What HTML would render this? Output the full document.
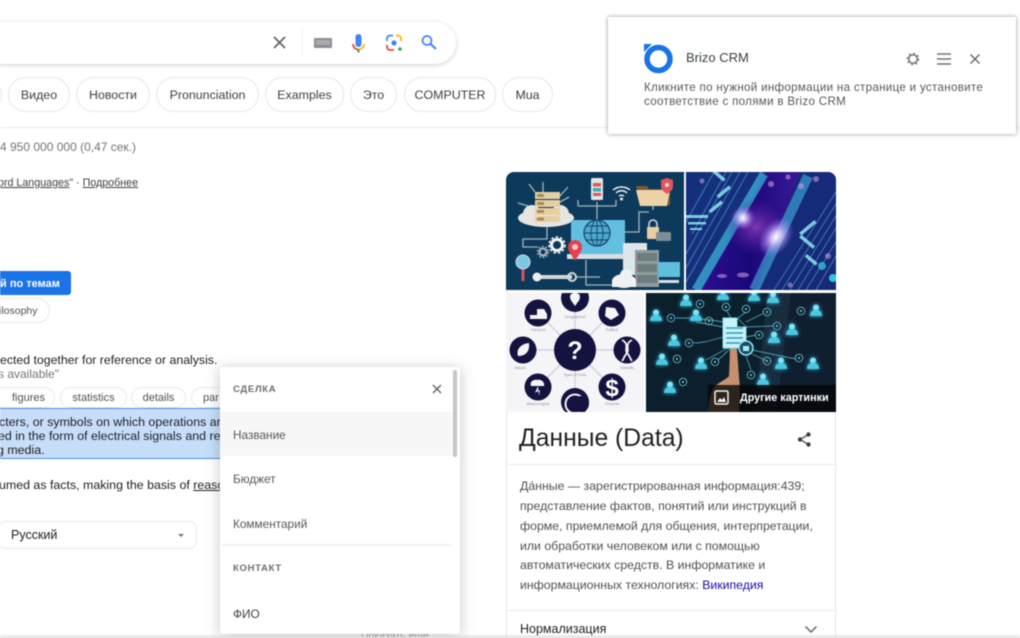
<!DOCTYPE html>
<html lang="ru">
<head>
<meta charset="utf-8">
<title>Brizo CRM</title>
<style>
html,body{margin:0;padding:0;background:#fff}
#p{position:relative;width:1020px;height:638px;overflow:hidden;background:#fff;font-family:"Liberation Sans",sans-serif;color:#202124;filter:blur(.45px)}
.a{position:absolute;white-space:nowrap}
.t{position:absolute;white-space:nowrap;line-height:14px}
.chip{position:absolute;top:77px;height:35px;box-sizing:border-box;border:1px solid #e6e7e9;border-radius:18px;font-size:12.400px;line-height:34px;text-align:center;color:#3c4043;background:#fff}
.c2{position:absolute;top:387px;height:21px;box-sizing:border-box;border:1px solid #e8e9eb;border-radius:11px;font-size:11px;line-height:20px;text-align:center;color:#4d5156;background:#fff}
</style>
</head>
<body>
<div id="p">
  <!-- search bar -->
  <div class="a" style="left:-40px;top:22px;width:496px;height:42px;border-radius:21px;background:#fff;box-shadow:0 1px 5px rgba(60,64,67,.25)"></div>
  <svg class="a" style="left:260px;top:20px" width="200" height="45" viewBox="0 0 200 45">
    <path d="M14 17l11 11M25 17L14 28" stroke="#5f6368" stroke-width="1.700" fill="none"/>
    <rect x="41.500" y="10" width="1" height="26" fill="#f0f1f3"/>
    <rect x="54" y="18" width="18" height="10" rx="1" fill="#8b8e92"/>
    <rect x="56" y="20" width="14" height="5" fill="#aaacaf"/>
    <rect x="95.500" y="14" width="6" height="13" rx="3" fill="#4285f4"/>
    <path d="M93 24a5.500 5.500 0 0 0 5.500 5.500" stroke="#ea4335" stroke-width="1.800" fill="none"/>
    <path d="M104 24a5.500 5.500 0 0 1-5.500 5.500" stroke="#fbbc05" stroke-width="1.800" fill="none"/>
    <rect x="97.500" y="29" width="2" height="3.500" fill="#34a853"/>
    <path d="M127 21v-2.500a3 3 0 0 1 3-3h3" stroke="#4285f4" stroke-width="1.800" fill="none"/>
    <path d="M136 15.500h2a3 3 0 0 1 3 3V21" stroke="#fbbc05" stroke-width="1.800" fill="none"/>
    <path d="M127 25v2a3 3 0 0 0 3 3h4" stroke="#ea4335" stroke-width="1.800" fill="none"/>
    <circle cx="134" cy="23" r="2.600" fill="#4285f4"/>
    <circle cx="140" cy="29" r="1.800" fill="#34a853"/>
    <circle cx="167" cy="20.500" r="4.500" stroke="#4285f4" stroke-width="1.700" fill="none"/>
    <path d="M170.500 24l5.500 5" stroke="#4285f4" stroke-width="2" fill="none"/>
  </svg>

  <!-- chips -->
  <div class="chip" style="left:-40px;width:42px"></div>
  <div class="chip" style="left:8px;width:62px">Видео</div>
  <div class="chip" style="left:76px;width:74px">Новости</div>
  <div class="chip" style="left:156px;width:103px">Pronunciation</div>
  <div class="chip" style="left:265px;width:79px">Examples</div>
  <div class="chip" style="left:350px;width:47px">Это</div>
  <div class="chip" style="left:404px;width:92px">COMPUTER</div>
  <div class="chip" style="left:502px;width:51px">Mua</div>
  <div class="a" style="left:0;top:127px;width:1020px;height:1px;background:#eceded"></div>

  <div class="t" style="left:0;top:140px;font-size:12px;color:#70757a">4 950 000 000 (0,47 сек.)</div>
  <div class="t" style="left:-2px;top:176px;font-size:10.700px;color:#3c4043"><u>ord Languages</u>" · <u>Подробнее</u></div>

  <!-- left results -->
  <div class="a" style="left:-40px;top:271px;width:111px;height:24px;border-radius:3px;background:#1a73e8"></div>
  <div class="t" style="left:0;top:277px;font-size:11px;font-weight:bold;color:#fff">й по темам</div>
  <div class="a" style="left:-40px;top:298px;width:90px;height:25px;box-sizing:border-box;border:1px solid #e8e9eb;border-radius:13px"></div>
  <div class="t" style="left:-1px;top:304px;font-size:10.500px;color:#4d5156">ilosophy</div>

  <div class="t" style="left:0;top:353px;font-size:12.300px;color:#202124">ected together for reference or analysis.</div>
  <div class="t" style="left:-2px;top:367px;font-size:12px;color:#70757a">s available"</div>

  <div class="c2" style="left:-30px;width:85px;padding-left:32px">figures</div>
  <div class="c2" style="left:60px;width:67px">statistics</div>
  <div class="c2" style="left:131px;width:55px">details</div>
  <div class="c2" style="left:191px;width:60px;text-align:left;padding-left:11px">par</div>

  <div class="a" style="left:0;top:408px;width:225px;height:51px;box-sizing:border-box;background:#c6defa;border-top:1px solid #4c8fdc;border-bottom:1px solid #4c8fdc"></div>
  <div class="t" style="left:-1px;top:415px;font-size:12.400px">cters, or symbols on which operations are</div>
  <div class="t" style="left:-2px;top:429px;font-size:12.400px">ed in the form of electrical signals and re</div>
  <div class="t" style="left:-3px;top:443px;font-size:12.400px">g media.</div>

  <div class="t" style="left:-1px;top:478px;font-size:12.400px">umed as facts, making the basis of <u>reason</u></div>

  <div class="a" style="left:-2px;top:521px;width:199px;height:28px;box-sizing:border-box;border:1px solid #e8e9eb;border-radius:8px;background:#fff"></div>
  <div class="t" style="left:11px;top:528px;font-size:12.500px">Русский</div>
  <svg class="a" style="left:177px;top:533px" width="9" height="5"><path d="M1 1h6L4 4z" fill="#70757a"/></svg>

  <div class="t" style="left:361px;top:629px;font-size:10.500px;color:#70757a">Показать еще</div>

  <!-- knowledge panel -->
  <div class="a" style="left:506px;top:172px;width:330px;height:480px;box-sizing:border-box;border:1px solid #e4e5e7;border-radius:8px;background:#fff"></div>
  <svg class="a" style="left:506px;top:172px" width="330" height="240" viewBox="0 0 330 240">
    <defs>
      <clipPath id="round"><path d="M0 8a8 8 0 0 1 8-8h314a8 8 0 0 1 8 8v232H0z"/></clipPath>
      <clipPath id="i3"><rect x="0" y="121" width="138" height="119"/></clipPath>
      <clipPath id="i4"><rect x="140" y="121" width="190" height="119"/></clipPath>
      <linearGradient id="band" x1="0" y1="0" x2="1" y2="0">
        <stop offset="0" stop-color="#2a0f90"/><stop offset=".5" stop-color="#1a0878"/><stop offset="1" stop-color="#3a1898"/>
      </linearGradient>
      <radialGradient id="glow"><stop offset="0" stop-color="#fff"/><stop offset=".3" stop-color="#e0d0ff" stop-opacity=".85"/><stop offset="1" stop-color="#9a70ff" stop-opacity="0"/></radialGradient>
      <radialGradient id="pur"><stop offset="0" stop-color="#8a3cb8" stop-opacity=".9"/><stop offset="1" stop-color="#5a20a8" stop-opacity="0"/></radialGradient>
      <g id="pp"><circle cx="0" cy="-3.500" r="3" fill="#7fe4f4"/><path d="M-6 5c0-5 3-6 6-6s6 1 6 6z" fill="#4cc6e2"/></g>
      <g id="nd"><circle r="3.800" fill="none" stroke="#62b8ca" stroke-width=".9"/><circle r="1.100" fill="#62b8ca"/></g>
    </defs>
    <g clip-path="url(#round)">
      <!-- image 1 -->
      <rect width="178" height="118" fill="#0d3a5a"/>
      <g stroke="#9fb4bf" stroke-width="1.300" fill="none">
        <path d="M29 20l-6-8M37 20V10M54 24l8-9M54 30l9-5M22 34l-10-3M41 53v14H17v8h15M91 30v18M72 34h38M72 28v6M110 28v6M119 60h14V40h10M147 38v-4M69 105h25M80 88v25h27"/>
      </g>
      <ellipse cx="40" cy="46" rx="28" ry="9" fill="#e7e5e2"/><circle cx="26" cy="42" r="9" fill="#e7e5e2"/><circle cx="54" cy="42" r="9" fill="#e7e5e2"/>
      <rect x="29" y="20" width="25" height="7" fill="#e6cfa3"/><rect x="29" y="28" width="25" height="7" fill="#e6cfa3"/><rect x="29" y="36" width="25" height="7" fill="#e6cfa3"/><rect x="29" y="44" width="25" height="6" fill="#e6cfa3"/>
      <rect x="31" y="22" width="7" height="3" fill="#a98a55"/><rect x="31" y="30" width="7" height="3" fill="#a98a55"/><rect x="31" y="38" width="7" height="3" fill="#a98a55"/><rect x="31" y="45.500" width="7" height="3" fill="#a98a55"/>
      <rect x="85" y="6" width="12" height="22" rx="1.500" fill="#e2e4e6"/><rect x="87" y="11" width="8" height="3.500" fill="#e4525c"/><rect x="87" y="16" width="8" height="3.500" fill="#36b0a8"/><rect x="87" y="21" width="8" height="3" fill="#e4525c"/>
      <g stroke="#eef2f4" stroke-width="1.400" fill="none"><path d="M107 18c5-4 12-4 17 0M110 21c3-3 8-3 11 0M113 24c2-1 3-1 5 0"/></g><circle cx="115.500" cy="27" r="1.500" fill="#eef2f4"/>
      <path d="M130 14h11l2 3h21v16h-28z" fill="#7a5c36"/><path d="M130 18h34l-3 16h-27z" fill="#ecd4a8"/>
      <path d="M161 6l6 2v6c0 4-3 6-6 8-3-2-6-4-6-8V8z" fill="#e3545f"/><circle cx="161" cy="13" r="2" fill="#f5d6d8"/>
      <rect x="65" y="48" width="54" height="34" rx="1" fill="#63bfe0"/><rect x="61" y="82" width="64" height="5" fill="#d8dee2"/>
      <circle cx="91" cy="61" r="13" fill="#4ea7cc" stroke="#12466a" stroke-width="1.200"/><g stroke="#12466a" stroke-width=".9" fill="none"><ellipse cx="91" cy="61" rx="6" ry="13"/><path d="M78 61h26M80 54h22M80 68h22M91 48v26"/></g>
      <path d="M69 89c-4-7-7-10-7-14a7 7 0 0 1 14 0c0 4-3 7-7 14z" fill="#e5414f"/><circle cx="69" cy="75" r="3" fill="#f4c7cb"/>
      <circle cx="51" cy="73" r="5.500" fill="none" stroke="#f1f3f4" stroke-width="3"/><circle cx="51" cy="73" r="8" fill="none" stroke="#f1f3f4" stroke-width="1.600" stroke-dasharray="2.500 2"/>
      <circle cx="37" cy="80" r="3.500" fill="none" stroke="#b4c0c6" stroke-width="2"/><circle cx="37" cy="80" r="5.500" fill="none" stroke="#b4c0c6" stroke-width="1.200" stroke-dasharray="2 1.500"/>
      <rect x="15.500" y="96" width="3" height="13" fill="#d9505c"/><circle cx="17" cy="90" r="7" fill="#7cc7e2" stroke="#cfe2ea" stroke-width="1"/>
      <path d="M30 105h36" stroke="#d4d6d8" stroke-width="4"/><circle cx="31" cy="105" r="4.500" fill="#eceeef"/><circle cx="66" cy="105" r="4" fill="none" stroke="#d4d6d8" stroke-width="2"/>
      <path d="M143 55v-3a4 4 0 0 1 8 0v3" fill="none" stroke="#d4d6d8" stroke-width="1.600"/><rect x="141" y="55" width="12" height="12" rx="1" fill="#e6cfa3"/><rect x="150" y="60" width="15" height="9" rx="1" fill="#7e8e96"/>
      <rect x="117" y="71" width="24" height="32" fill="#dde6ea"/>
      <rect x="129" y="78" width="24" height="37" fill="#8d9c9e"/><rect x="131" y="81" width="20" height="8" fill="#6e7d7e"/><rect x="131" y="92" width="20" height="8" fill="#6e7d7e"/><rect x="131" y="103" width="20" height="8" fill="#6e7d7e"/>
      <circle cx="133" cy="85" r="1" fill="#e5414f"/><circle cx="133" cy="96" r="1" fill="#e5414f"/><circle cx="133" cy="107" r="1" fill="#e5414f"/>
      <rect x="152" y="90" width="22" height="15" fill="#5fbedd"/><rect x="153" y="108" width="20" height="3" fill="#d8dee2"/>
      <ellipse cx="118" cy="109" rx="12" ry="7" fill="#f0f1f2"/><circle cx="120" cy="103" r="6" fill="#f0f1f2"/><rect x="106" y="108" width="24" height="7" fill="#f0f1f2"/>

      <!-- image 2 -->
      <svg x="180" y="0" width="150" height="118" viewBox="0 0 150 118">
        <rect width="150" height="118" fill="#122a70"/>
        <path d="M0 0h80L15 118H0z" fill="#14307c"/>
        <path d="M114 0h36v118H72z" fill="#152a78"/>
        <path d="M15 118L80 0h34L70 118z" fill="url(#band)"/>
        <path d="M10 118L78 2" stroke="#3fb8dc" stroke-width="9" opacity=".7" fill="none"/>
        <path d="M68 118L122 4" stroke="#3fa8d8" stroke-width="10" opacity=".65" fill="none"/>
        <g stroke="#6cc8e4" stroke-width=".8" opacity=".6" fill="none">
          <path d="M0 50L28 0M6 62L40 0M0 82L46 0M0 96L54 0M0 110L62 0M88 118L150 20M96 118L150 32M104 118L150 44M112 118L150 56M120 118L150 70M130 118L150 84"/>
        </g>
        <g fill="#8ee6f2" opacity=".85">
          <rect x="0" y="43" width="22" height="3"/><rect x="2" y="50" width="18" height="2.500"/><rect x="4" y="56" width="12" height="2"/>
          <rect x="22" y="33" width="16" height="3.500" transform="rotate(-40 30 35)"/><rect x="30" y="18" width="16" height="3.500" transform="rotate(-40 38 20)"/><rect x="26" y="2" width="14" height="3.500" transform="rotate(40 33 4)"/>
          <rect x="112" y="68" width="18" height="3.500" transform="rotate(40 121 70)"/><rect x="112" y="54" width="20" height="3.500" transform="rotate(-40 122 56)"/><rect x="118" y="86" width="14" height="3.500" transform="rotate(40 125 88)"/>
        </g>
        <ellipse cx="70" cy="55" rx="30" ry="28" fill="url(#pur)"/>
        <circle cx="57" cy="46" r="12" fill="url(#glow)"/>
        <ellipse cx="90" cy="65" rx="15" ry="22" transform="rotate(35 90 65)" fill="url(#glow)"/>
        <g fill="#d8a0e8" opacity=".55"><circle cx="16" cy="9" r="2.500"/><circle cx="85" cy="12" r="3"/><circle cx="102" cy="5" r="2.500"/><circle cx="115" cy="14" r="3"/><circle cx="130" cy="7" r="3"/><ellipse cx="36" cy="104" rx="5" ry="2"/><ellipse cx="57" cy="103" rx="6" ry="2.500"/><circle cx="142" cy="84" r="3"/><circle cx="104" cy="113" r="2.500"/></g>
        <circle cx="136" cy="94" r="4" fill="#3ad0e0" opacity=".7"/><circle cx="147" cy="106" r="4" fill="#38e0e8" opacity=".85"/>
      </svg>

      <!-- image 3 -->
      <g clip-path="url(#i3)">
      <rect x="0" y="121" width="138" height="119" fill="#f5f5f7"/>
      <g stroke="#d2d3de" stroke-width="1.500"><path d="M69 178V126M69 178L32 141M69 178L106 141M69 178H17M69 178H121M69 178L32 215M69 178L106 215M69 178v52"/></g>
      <g fill="#14123f">
        <circle cx="69" cy="178" r="21"/><circle cx="69" cy="126" r="14"/><circle cx="32" cy="141" r="13.500"/><circle cx="106" cy="141" r="13.500"/><circle cx="17" cy="178" r="13.500"/><circle cx="121" cy="178" r="13.500"/><circle cx="32" cy="215" r="13.500"/><circle cx="106" cy="215" r="13.500"/><circle cx="69" cy="230" r="14"/>
      </g>
      <text x="69" y="187" text-anchor="middle" font-family="Liberation Sans,sans-serif" font-size="25" font-weight="bold" fill="#fff">?</text>
      <text x="106" y="224" text-anchor="middle" font-family="Liberation Sans,sans-serif" font-size="24" font-weight="bold" fill="#fff">$</text>
      <path d="M69 121c-3 0-5 1-5 4 0 3 3 6 5 9 2-3 5-6 5-9 0-3-2-4-5-4z" fill="#f5f5f7"/>
      <path d="M24 143h7v-6h7l3 5v5H24z" fill="#f5f5f7"/>
      <path d="M100 135l9 1 4 7-8 5-6-4z" fill="#f5f5f7"/>
      <path d="M12 184c-2-6 2-12 11-13 1 8-3 13-11 13z" fill="#f5f5f7"/>
      <path d="M116 168c8 4 2 10 5 13s3 6 5 8M126 168c-8 4-2 10-5 13s-3 6-5 8" fill="none" stroke="#f5f5f7" stroke-width="1.800"/>
      <path d="M25 214c-2-5 4-7 6-6 3-1 8 1 7 6zM32 214l-3 7 5-3-1 6" fill="#f5f5f7"/>
      <circle cx="69" cy="232" r="9.500" fill="none" stroke="#f5f5f7" stroke-width="2"/><circle cx="75" cy="232" r="8" fill="#14123f"/>
      <g fill="#8d8d99" font-family="Liberation Sans,sans-serif" font-size="3.500" text-anchor="middle"><text x="69" y="146">Geographical</text><text x="32" y="159">Transport</text><text x="106" y="159">Political</text><text x="14" y="197">Natural</text><text x="121" y="197">Scientific</text><text x="69" y="204">Types of Crisis</text><text x="32" y="233">Meteorological</text><text x="106" y="233">Financial</text></g>
      </g>

      <!-- image 4 -->
      <g clip-path="url(#i4)">
      <rect x="140" y="121" width="190" height="119" fill="#0c1f2c"/>
      <path d="M262 121h68v119h-82z" fill="#182c40"/>
      <path d="M285 121h45v119h-60z" fill="#101f30"/>
      <g stroke="#4e9eb0" stroke-width=".9" fill="none">
        <path d="M217 150C195 146 185 146 170 146M217 155L190 150M217 165C200 170 195 171 188 171M222 176L200 188M225 146C220 138 220 136 220 139M232 146L240 140M240 150L258 141M240 155L267 154M240 165L250 163M246 178L290 187M246 182L261 189M225 176L212 188M240 184L245 198"/>
      </g>
      <g style="filter:drop-shadow(0 0 2px #36c8e8)">
        <use href="#pp" x="150" y="144"/><use href="#pp" x="180" y="129"/><use href="#pp" x="190" y="144"/><use href="#pp" x="217" y="123"/><use href="#pp" x="248" y="124"/><use href="#pp" x="267" y="126"/><use href="#pp" x="310" y="139"/><use href="#pp" x="286" y="158"/><use href="#pp" x="268" y="166"/><use href="#pp" x="168" y="169"/><use href="#pp" x="156" y="188"/><use href="#pp" x="195" y="192"/><use href="#pp" x="275" y="192"/><use href="#pp" x="307" y="192"/><use href="#pp" x="164" y="216"/><use href="#pp" x="257" y="208"/>
      </g>
      <use href="#nd" x="165" y="146"/><use href="#nd" x="194" y="132"/><use href="#nd" x="203" y="149"/><use href="#nd" x="220" y="135"/><use href="#nd" x="240" y="137"/><use href="#nd" x="261" y="140"/><use href="#nd" x="271" y="154"/><use href="#nd" x="253" y="163"/><use href="#nd" x="183" y="171"/><use href="#nd" x="171" y="187"/><use href="#nd" x="209" y="190"/><use href="#nd" x="261" y="189"/><use href="#nd" x="293" y="186"/><use href="#nd" x="245" y="203"/><use href="#nd" x="177" y="210"/><use href="#nd" x="295" y="139"/>
      <path d="M217 146h14l9 9v21h-23z" fill="#c9f2fa" stroke="#7de4f4" stroke-width="1"/><path d="M220 156h17M220 161h17M220 166h17M220 171h17" stroke="#2b9cb8" stroke-width="1.500"/><path d="M231 146v9h9" fill="#0c1f2c" stroke="#7de4f4" stroke-width="1"/>
      <path d="M224 177c2-1 6-1 7 0l2 28c1 8 1 20 0 35h-31c1-10 2-20 7-26 6-5 12-7 14-10z" fill="#c4906f"/>
      <circle cx="240" cy="176" r="7" fill="#1c4d60" stroke="#8ce6f4" stroke-width="1.500"/><rect x="237" y="174" width="6" height="5" fill="#a4eef8"/>
      <rect x="202" y="213" width="128" height="27" fill="#050505" opacity=".78"/>
      </g>
    </g>
  </svg>
  <svg class="a" style="left:713px;top:389px" width="17" height="17" viewBox="0 0 17 17"><rect x="2" y="2" width="13" height="13" rx="1.500" fill="none" stroke="#f1f3f4" stroke-width="1.500"/><path d="M4 13l3-4 2 2 2-3 2 5z" fill="#f1f3f4"/></svg>
  <div class="t" style="left:740px;top:391px;font-size:10.800px;font-weight:bold;color:#fff">Другие картинки</div>

  <div class="t" style="left:519px;top:424px;line-height:29px;font-size:24.700px;color:#202124">Данные (Data)</div>
  <svg class="a" style="left:796px;top:431px" width="17" height="17" viewBox="0 0 17 17"><path d="M12.500 3.500L4 8.500l8.500 5" fill="none" stroke="#3c4043" stroke-width="1.300"/><circle cx="12.500" cy="3.500" r="2.200" fill="#3c4043"/><circle cx="4" cy="8.500" r="2.200" fill="#3c4043"/><circle cx="12.500" cy="13.500" r="2.200" fill="#3c4043"/></svg>
  <div class="a" style="left:507px;top:464px;width:328px;height:1px;background:#e8e9eb"></div>
  <div class="t" style="left:520px;top:479px;font-size:12.300px;color:#4d5156">Да́нные — зарегистрированная информация:439;</div>
  <div class="t" style="left:520px;top:499px;font-size:12.300px;color:#4d5156">представление фактов, понятий или инструкций в</div>
  <div class="t" style="left:520px;top:519px;font-size:12.300px;color:#4d5156">форме, приемлемой для общения, интерпретации,</div>
  <div class="t" style="left:520px;top:539px;font-size:12.300px;color:#4d5156">или обработки человеком или с помощью</div>
  <div class="t" style="left:520px;top:558px;font-size:12.300px;color:#4d5156">автоматических средств. В информатике и</div>
  <div class="t" style="left:520px;top:578px;font-size:12.300px;color:#4d5156">информационных технологиях: <span style="color:#1a0dab">Википедия</span></div>
  <div class="a" style="left:507px;top:610px;width:328px;height:1px;background:#e8e9eb"></div>
  <div class="t" style="left:520px;top:622px;font-size:12.500px;color:#202124">Нормализация</div>
  <svg class="a" style="left:804px;top:625px" width="14" height="9" viewBox="0 0 14 9"><path d="M1.500 1.500L7 7l5.500-5.500" fill="none" stroke="#5f6368" stroke-width="1.500"/></svg>

  <!-- Brizo popup field list -->
  <div class="a" style="left:220px;top:367px;width:240px;height:267px;background:#fff;border-radius:2px;box-shadow:0 2px 14px rgba(60,64,67,.3)"></div>
  <div class="a" style="left:220px;top:412px;width:233px;height:44px;background:#f7f7f7"></div>
  <div class="a" style="left:453px;top:370px;width:4px;height:87px;border-radius:2px;background:#c4c6c9"></div>
  <div class="t" style="left:233px;top:383px;font-size:9.500px;font-weight:bold;letter-spacing:.7px;color:#6a6e73">СДЕЛКА</div>
  <svg class="a" style="left:432px;top:384px" width="10" height="10" viewBox="0 0 10 10"><path d="M1 1l8 8M9 1L1 9" stroke="#5f6368" stroke-width="1.400"/></svg>
  <div class="t" style="left:233px;top:428px;font-size:11.800px;color:#55595e">Название</div>
  <div class="t" style="left:233px;top:472px;font-size:11.800px;color:#55595e">Бюджет</div>
  <div class="t" style="left:233px;top:517px;font-size:11.800px;color:#55595e">Комментарий</div>
  <div class="a" style="left:222px;top:544px;width:229px;height:2px;background:#f0f1f1"></div>
  <div class="t" style="left:233px;top:562px;font-size:9.500px;font-weight:bold;letter-spacing:.7px;color:#6a6e73">КОНТАКТ</div>
  <div class="t" style="left:233px;top:607px;font-size:11.800px;color:#3c4043">ФИО</div>

  <!-- Brizo header panel -->
  <div class="a" style="left:608px;top:17px;width:408px;height:117px;background:#fff;box-shadow:0 0 4px rgba(60,64,67,.55)"></div>
  <svg class="a" style="left:640px;top:40px" width="36" height="36" viewBox="0 0 36 36">
    <circle cx="18.500" cy="19" r="11.500" fill="none" stroke="#1a73e8" stroke-width="5.500"/>
    <path d="M4 4h8L4 12z" fill="#1a73e8"/>
  </svg>
  <div class="t" style="left:686px;top:51px;font-size:13px;color:#3c4043">Brizo CRM</div>
  <svg class="a" style="left:905px;top:50px" width="80" height="18" viewBox="0 0 80 18">
    <circle cx="8" cy="9" r="4.300" fill="none" stroke="#70757a" stroke-width="1.500"/>
    <circle cx="8" cy="9" r="5.700" fill="none" stroke="#70757a" stroke-width="1.400" stroke-dasharray="1.800 2.670"/>
    <path d="M32 4h14M32 9h14M32 14h14" stroke="#70757a" stroke-width="1.400"/>
    <path d="M65.500 4.500l9 9M74.500 4.500l-9 9" stroke="#5f6368" stroke-width="1.400"/>
  </svg>
  <div class="t" style="left:644px;top:81px;font-size:11.600px;letter-spacing:.3px;color:#55595e">Кликните по нужной информации на странице и установите</div>
  <div class="t" style="left:644px;top:95px;font-size:11.600px;letter-spacing:.3px;color:#55595e">соответствие с полями в Brizo CRM</div>

  <!-- bottom fade -->
  <div class="a" style="left:0;top:634px;width:1020px;height:4px;background:linear-gradient(rgba(225,226,228,0),rgba(215,216,218,.9))"></div>
</div>
</body>
</html>
